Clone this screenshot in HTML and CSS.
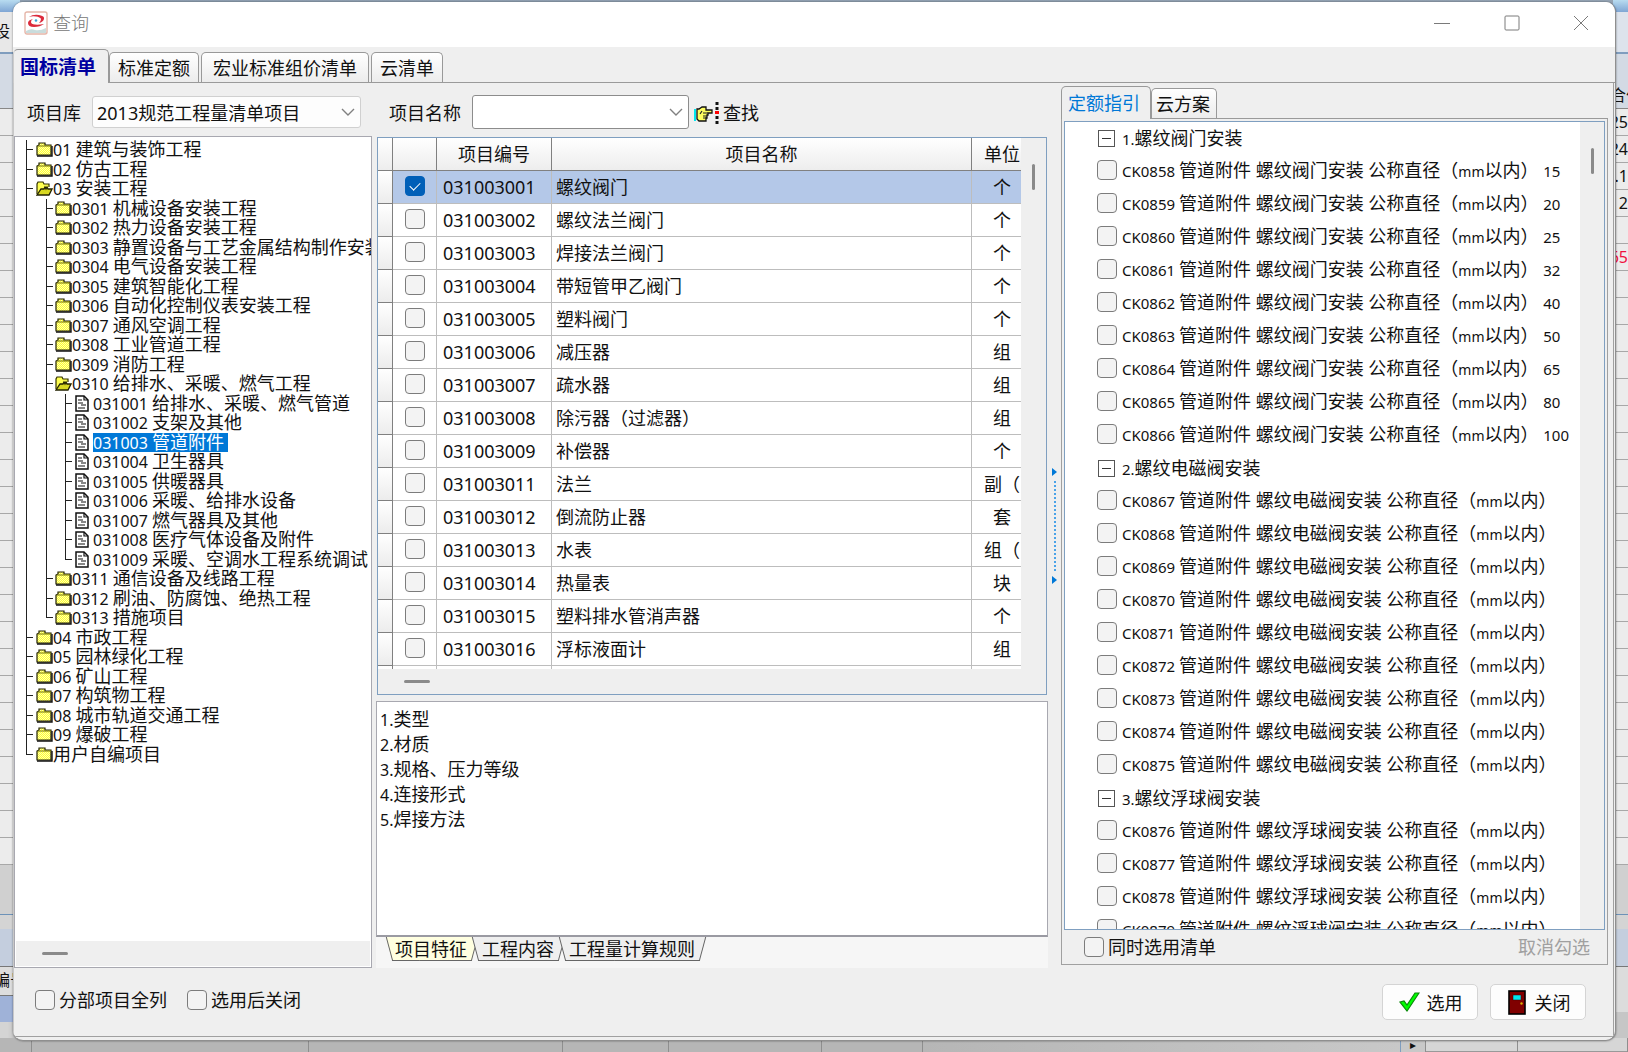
FILE: index.html
```html
<!DOCTYPE html>
<html lang="zh-CN">
<head>
<meta charset="utf-8">
<meta name="viewport" content="width=device-width, initial-scale=1">
<title>查询</title>
<link rel="stylesheet" href="styles.css">
</head>
<body>

<svg class="sprite" aria-hidden="true">
  <defs>
    <pattern id="dither" width="2" height="2" patternUnits="userSpaceOnUse">
      <rect width="2" height="2" fill="#ffff30"/><rect width="1" height="1" fill="#ffffb0"/><rect x="1" y="1" width="1" height="1" fill="#ffffb0"/>
    </pattern>
  </defs>
  <symbol id="folder" viewBox="0 0 17 15">
    <path d="M1 13V4l2-1V1h6v2h6v10z" fill="url(#dither)" stroke="#222200" stroke-width="1.2"/>
    <path d="M2 4h13" stroke="#77770a"/><path d="M1 14h15V4" fill="none" stroke="#111" stroke-width="1.4"/>
  </symbol>
  <symbol id="folder-open" viewBox="0 0 17 15">
    <path d="M1 13V3l1-2h5l1 2h5v3" fill="#ffff50" stroke="#333300" stroke-width="1.2"/>
    <path d="M1 14l4-6h3l1-2 1 2 1-2 1 2h4l-3 6z" fill="#d8d820" stroke="#222200" stroke-width="1.3"/>
  </symbol>
  <symbol id="doc" viewBox="0 0 14 17">
    <path d="M1 1h8l4 4v11H1z" fill="#fff" stroke="#111" stroke-width="1.5"/>
    <path d="M9 1v4h4M3 5h4M3 8h5M6 10h5M3 13h7" fill="none" stroke="#111" stroke-width="1.2"/>
  </symbol>
  <symbol id="chevron" viewBox="0 0 14 8">
    <path d="M1 1l6 6 6-6" fill="none" stroke="#808080" stroke-width="1.4"/>
  </symbol>
</svg>

<div class="backdrop" aria-hidden="true">
  <div class="edge edge-left">
    <div class="edge-sky"></div>
    <div class="edge-bar"><span>设</span></div>
    <div class="edge-head"></div>
    <div class="edge-rows"></div>
    <div class="edge-gap"></div>
    <div class="edge-tool"></div>
    <div class="edge-name"><span>编号</span></div>
    <div class="edge-sel"></div>
  </div>
  <div class="edge edge-right">
    <div class="edge-sky"></div>
    <div class="edge-bar"></div>
    <div class="edge-head edge-head-label"><span>合价</span></div>
    <div class="edge-rows">
      <span>25</span><span>24</span><span>.1</span><span>2</span><span></span><span class="neg">65</span>
    </div>
    <div class="edge-gap"></div>
    <div class="edge-tool"></div>
    <div class="edge-foot"></div>
  </div>
  <div class="edge-bottom">
    <i></i><i></i><i></i><i></i><i></i><i></i><b></b><em>▸</em><u></u><s></s>
  </div>
</div>

<main class="window">
  <header class="titlebar">
    <svg class="logo" viewBox="0 0 24 24" aria-hidden="true">
      <rect x="1" y="1" width="22" height="22" rx="2" fill="#fff" stroke="#e5b5a8" stroke-width="1.4"/>
      <path d="M2 20q5-3 9-1 5 1 11-2v5H2z" fill="#c9dcdc"/>
      <path d="M5 6q4-3 10-2 6 1 5 4-1 3-5 4 2-2 2-4-1-2-5-2.500-4-.5-7 .5z" fill="#dc2b3c"/>
      <path d="M9 8q-5 1-5 4 0 4 6 4 6 0 10-3-6 1-9 .5-4-.5-4-2.500 0-2 2-3z" fill="#dc2b3c"/>
      <circle cx="12" cy="9.500" r="1.300" fill="#3aa6d8"/>
    </svg>
    <h1>查询</h1>
    <button class="win-btn" aria-label="最小化"><svg viewBox="0 0 16 16"><path d="M0 8.500h16"/></svg></button>
    <button class="win-btn" aria-label="最大化"><svg viewBox="0 0 16 16"><rect x="1" y="1" width="14" height="14" rx="1"/></svg></button>
    <button class="win-btn" aria-label="关闭窗口"><svg viewBox="0 0 16 16"><path d="M1 1l14 14M15 1L1 15"/></svg></button>
  </header>

  <nav class="tabs main-tabs" role="tablist">
    <button class="tab active" role="tab" aria-selected="true">国标清单</button>
    <button class="tab" role="tab">标准定额</button>
    <button class="tab wide" role="tab">宏业标准组价清单</button>
    <button class="tab" role="tab">云清单</button>
  </nav>

  <div class="page">
    <div class="columns">

      <section class="col-left">
        <div class="toolbar">
          <label for="lib">项目库</label>
          <div class="combo combo-soft">
            <select id="lib"><option>2013规范工程量清单项目</option></select>
            <svg><use href="#chevron"/></svg>
          </div>
        </div>
        <div class="tree-panel">
          <ul class="tree" role="tree">
            <li class="l0"><svg><use href="#folder"/></svg><span><b>01 </b>建筑与装饰工程</span></li>
            <li class="l0"><svg><use href="#folder"/></svg><span><b>02 </b>仿古工程</span></li>
            <li class="l0"><svg><use href="#folder-open"/></svg><span><b>03 </b>安装工程</span></li>
            <li class="l1"><svg><use href="#folder"/></svg><span><b>0301 </b>机械设备安装工程</span></li>
            <li class="l1"><svg><use href="#folder"/></svg><span><b>0302 </b>热力设备安装工程</span></li>
            <li class="l1"><svg><use href="#folder"/></svg><span><b>0303 </b>静置设备与工艺金属结构制作安装工程</span></li>
            <li class="l1"><svg><use href="#folder"/></svg><span><b>0304 </b>电气设备安装工程</span></li>
            <li class="l1"><svg><use href="#folder"/></svg><span><b>0305 </b>建筑智能化工程</span></li>
            <li class="l1"><svg><use href="#folder"/></svg><span><b>0306 </b>自动化控制仪表安装工程</span></li>
            <li class="l1"><svg><use href="#folder"/></svg><span><b>0307 </b>通风空调工程</span></li>
            <li class="l1"><svg><use href="#folder"/></svg><span><b>0308 </b>工业管道工程</span></li>
            <li class="l1"><svg><use href="#folder"/></svg><span><b>0309 </b>消防工程</span></li>
            <li class="l1"><svg><use href="#folder-open"/></svg><span><b>0310 </b>给排水、采暖、燃气工程</span></li>
            <li class="l2"><svg><use href="#doc"/></svg><span><b>031001 </b>给排水、采暖、燃气管道</span></li>
            <li class="l2"><svg><use href="#doc"/></svg><span><b>031002 </b>支架及其他</span></li>
            <li class="l2"><svg><use href="#doc"/></svg><span class="current"><b>031003 </b>管道附件</span></li>
            <li class="l2"><svg><use href="#doc"/></svg><span><b>031004 </b>卫生器具</span></li>
            <li class="l2"><svg><use href="#doc"/></svg><span><b>031005 </b>供暖器具</span></li>
            <li class="l2"><svg><use href="#doc"/></svg><span><b>031006 </b>采暖、给排水设备</span></li>
            <li class="l2"><svg><use href="#doc"/></svg><span><b>031007 </b>燃气器具及其他</span></li>
            <li class="l2"><svg><use href="#doc"/></svg><span><b>031008 </b>医疗气体设备及附件</span></li>
            <li class="l2 last"><svg><use href="#doc"/></svg><span><b>031009 </b>采暖、空调水工程系统调试</span></li>
            <li class="l1"><svg><use href="#folder"/></svg><span><b>0311 </b>通信设备及线路工程</span></li>
            <li class="l1"><svg><use href="#folder"/></svg><span><b>0312 </b>刷油、防腐蚀、绝热工程</span></li>
            <li class="l1 last"><svg><use href="#folder"/></svg><span><b>0313 </b>措施项目</span></li>
            <li class="l0"><svg><use href="#folder"/></svg><span><b>04 </b>市政工程</span></li>
            <li class="l0"><svg><use href="#folder"/></svg><span><b>05 </b>园林绿化工程</span></li>
            <li class="l0"><svg><use href="#folder"/></svg><span><b>06 </b>矿山工程</span></li>
            <li class="l0"><svg><use href="#folder"/></svg><span><b>07 </b>构筑物工程</span></li>
            <li class="l0"><svg><use href="#folder"/></svg><span><b>08 </b>城市轨道交通工程</span></li>
            <li class="l0"><svg><use href="#folder"/></svg><span><b>09 </b>爆破工程</span></li>
            <li class="l0 last"><svg><use href="#folder"/></svg><span>用户自编项目</span></li>
          </ul>
          <div class="hscroll"><div class="thumb"></div></div>
        </div>
      </section>

      <section class="col-mid">
        <div class="toolbar toolbar-mid">
          <label for="name">项目名称</label>
          <div class="combo">
            <select id="name"><option></option></select>
            <svg><use href="#chevron"/></svg>
          </div>
          <button class="find">
            <svg viewBox="0 0 25 22" aria-hidden="true">
              <path d="M1 7v12" stroke="#00e8f0" stroke-width="2"/>
              <path d="M3 7h2l3-2h4v3h6v3h-4v2h-1v3h-1v3H5l-2-2z" fill="#ffff60" stroke="#111" stroke-width="1.300"/>
              <path d="M8 9l-2 3M9 11h5M9 14h4M9 16h4" fill="none" stroke="#222" stroke-width="1.200"/>
              <path d="M23 0v3M23 5v3M23 14v3M23 19v3" stroke="#111" stroke-width="3"/>
              <path d="M23 9v3" stroke="#f00" stroke-width="4"/>
            </svg>
            <span>查找</span>
          </button>
        </div>

        <div class="grid-panel">
          <div class="grid-view">
            <table class="grid">
              <colgroup><col class="c-mark"><col class="c-check"><col class="c-code"><col><col class="c-unit"></colgroup>
              <thead><tr><th></th><th></th><th>项目编号</th><th>项目名称</th><th>单位</th></tr></thead>
              <tbody>
                <tr class="selected"><td></td><td><input type="checkbox" aria-label="031003001" checked></td><td>031003001</td><td>螺纹阀门</td><td>个</td></tr>
                <tr><td></td><td><input type="checkbox" aria-label="031003002"></td><td>031003002</td><td>螺纹法兰阀门</td><td>个</td></tr>
                <tr><td></td><td><input type="checkbox" aria-label="031003003"></td><td>031003003</td><td>焊接法兰阀门</td><td>个</td></tr>
                <tr><td></td><td><input type="checkbox" aria-label="031003004"></td><td>031003004</td><td>带短管甲乙阀门</td><td>个</td></tr>
                <tr><td></td><td><input type="checkbox" aria-label="031003005"></td><td>031003005</td><td>塑料阀门</td><td>个</td></tr>
                <tr><td></td><td><input type="checkbox" aria-label="031003006"></td><td>031003006</td><td>减压器</td><td>组</td></tr>
                <tr><td></td><td><input type="checkbox" aria-label="031003007"></td><td>031003007</td><td>疏水器</td><td>组</td></tr>
                <tr><td></td><td><input type="checkbox" aria-label="031003008"></td><td>031003008</td><td>除污器（过滤器）</td><td>组</td></tr>
                <tr><td></td><td><input type="checkbox" aria-label="031003009"></td><td>031003009</td><td>补偿器</td><td>个</td></tr>
                <tr><td></td><td><input type="checkbox" aria-label="031003011"></td><td>031003011</td><td>法兰</td><td>副（</td></tr>
                <tr><td></td><td><input type="checkbox" aria-label="031003012"></td><td>031003012</td><td>倒流防止器</td><td>套</td></tr>
                <tr><td></td><td><input type="checkbox" aria-label="031003013"></td><td>031003013</td><td>水表</td><td>组（</td></tr>
                <tr><td></td><td><input type="checkbox" aria-label="031003014"></td><td>031003014</td><td>热量表</td><td>块</td></tr>
                <tr><td></td><td><input type="checkbox" aria-label="031003015"></td><td>031003015</td><td>塑料排水管消声器</td><td>个</td></tr>
                <tr><td></td><td><input type="checkbox" aria-label="031003016"></td><td>031003016</td><td>浮标液面计</td><td>组</td></tr>
                <tr><td></td><td></td><td></td><td></td><td></td></tr>
              </tbody>
            </table>
          </div>
          <div class="vscroll"><div class="thumb"></div></div>
          <div class="hscroll"><div class="thumb"></div></div>
        </div>

        <div class="features">
          <p><b>1.</b>类型</p>
          <p><b>2.</b>材质</p>
          <p><b>3.</b>规格、压力等级</p>
          <p><b>4.</b>连接形式</p>
          <p><b>5.</b>焊接方法</p>
        </div>
        <div class="sheet-tabs" role="tablist">
          <button class="sheet active" role="tab" aria-selected="true">项目特征</button>
          <button class="sheet" role="tab">工程内容</button>
          <button class="sheet" role="tab">工程量计算规则</button>
        </div>
      </section>

      <div class="splitter" role="separator"><i></i><span></span><i></i></div>

      <section class="col-right">
        <nav class="tabs side-tabs" role="tablist">
          <button class="tab active" role="tab" aria-selected="true">定额指引</button>
          <button class="tab" role="tab">云方案</button>
        </nav>
        <div class="side-page">
          <div class="quota">
            <ul>
              <li class="group"><button aria-label="折叠"></button><span><b>1.</b>螺纹阀门安装</span></li>
              <li><label><input type="checkbox"><span><b>CK0858 </b>管道附件 螺纹阀门安装 公称直径（<small>mm</small>以内） <b>15</b></span></label></li>
              <li><label><input type="checkbox"><span><b>CK0859 </b>管道附件 螺纹阀门安装 公称直径（<small>mm</small>以内） <b>20</b></span></label></li>
              <li><label><input type="checkbox"><span><b>CK0860 </b>管道附件 螺纹阀门安装 公称直径（<small>mm</small>以内） <b>25</b></span></label></li>
              <li><label><input type="checkbox"><span><b>CK0861 </b>管道附件 螺纹阀门安装 公称直径（<small>mm</small>以内） <b>32</b></span></label></li>
              <li><label><input type="checkbox"><span><b>CK0862 </b>管道附件 螺纹阀门安装 公称直径（<small>mm</small>以内） <b>40</b></span></label></li>
              <li><label><input type="checkbox"><span><b>CK0863 </b>管道附件 螺纹阀门安装 公称直径（<small>mm</small>以内） <b>50</b></span></label></li>
              <li><label><input type="checkbox"><span><b>CK0864 </b>管道附件 螺纹阀门安装 公称直径（<small>mm</small>以内） <b>65</b></span></label></li>
              <li><label><input type="checkbox"><span><b>CK0865 </b>管道附件 螺纹阀门安装 公称直径（<small>mm</small>以内） <b>80</b></span></label></li>
              <li><label><input type="checkbox"><span><b>CK0866 </b>管道附件 螺纹阀门安装 公称直径（<small>mm</small>以内） <b>100</b></span></label></li>
              <li class="group"><button aria-label="折叠"></button><span><b>2.</b>螺纹电磁阀安装</span></li>
              <li><label><input type="checkbox"><span><b>CK0867 </b>管道附件 螺纹电磁阀安装 公称直径（<small>mm</small>以内）</span></label></li>
              <li><label><input type="checkbox"><span><b>CK0868 </b>管道附件 螺纹电磁阀安装 公称直径（<small>mm</small>以内）</span></label></li>
              <li><label><input type="checkbox"><span><b>CK0869 </b>管道附件 螺纹电磁阀安装 公称直径（<small>mm</small>以内）</span></label></li>
              <li><label><input type="checkbox"><span><b>CK0870 </b>管道附件 螺纹电磁阀安装 公称直径（<small>mm</small>以内）</span></label></li>
              <li><label><input type="checkbox"><span><b>CK0871 </b>管道附件 螺纹电磁阀安装 公称直径（<small>mm</small>以内）</span></label></li>
              <li><label><input type="checkbox"><span><b>CK0872 </b>管道附件 螺纹电磁阀安装 公称直径（<small>mm</small>以内）</span></label></li>
              <li><label><input type="checkbox"><span><b>CK0873 </b>管道附件 螺纹电磁阀安装 公称直径（<small>mm</small>以内）</span></label></li>
              <li><label><input type="checkbox"><span><b>CK0874 </b>管道附件 螺纹电磁阀安装 公称直径（<small>mm</small>以内）</span></label></li>
              <li><label><input type="checkbox"><span><b>CK0875 </b>管道附件 螺纹电磁阀安装 公称直径（<small>mm</small>以内）</span></label></li>
              <li class="group"><button aria-label="折叠"></button><span><b>3.</b>螺纹浮球阀安装</span></li>
              <li><label><input type="checkbox"><span><b>CK0876 </b>管道附件 螺纹浮球阀安装 公称直径（<small>mm</small>以内）</span></label></li>
              <li><label><input type="checkbox"><span><b>CK0877 </b>管道附件 螺纹浮球阀安装 公称直径（<small>mm</small>以内）</span></label></li>
              <li><label><input type="checkbox"><span><b>CK0878 </b>管道附件 螺纹浮球阀安装 公称直径（<small>mm</small>以内）</span></label></li>
              <li><label><input type="checkbox"><span><b>CK0879 </b>管道附件 螺纹浮球阀安装 公称直径（<small>mm</small>以内）</span></label></li>
            </ul>
            <div class="vscroll"><div class="thumb"></div></div>
          </div>
          <div class="side-foot">
            <label><input type="checkbox"><span>同时选用清单</span></label>
            <button disabled>取消勾选</button>
          </div>
        </div>
      </section>
    </div>

    <footer class="footer">
      <label><input type="checkbox"><span>分部项目全列</span></label>
      <label><input type="checkbox"><span>选用后关闭</span></label>
      <button class="action push">
        <svg viewBox="0 0 22 22" aria-hidden="true"><path d="M2 11l4-1 3 4L17 2h4L9 20z" fill="#0f0" stroke="#0a8a0a" stroke-width="1.200"/></svg>
        <span>选用</span>
      </button>
      <button class="action">
        <svg viewBox="0 0 22 26" aria-hidden="true"><rect x="3" y="2" width="16" height="23" fill="#800000" stroke="#000" stroke-width="1.600"/><rect x="7" y="6" width="8" height="5" fill="#00e8f0" stroke="#400" stroke-width=".5"/><circle cx="15.500" cy="14.500" r="1.200" fill="#d8b000"/></svg>
        <span>关闭</span>
      </button>
    </footer>
  </div>
</main>
</body>
</html>
```

FILE: styles.css
```css
* { box-sizing: border-box; }

body {
  margin: 0;
  height: 100vh;
  padding: 2px 12px 11px 13px;
  overflow: hidden;
  background: #c4c4c4;
  color: #111;
  font-family: "Noto Sans", "Noto Sans CJK SC", sans-serif;
  font-size: 18px;
  line-height: 24px;
}

button, select, input { font: inherit; color: inherit; margin: 0; padding: 0; }
button { border: 0; background: none; }
b, small { font-weight: 400; font-size: 16px; line-height: 16px; }
small { font-size: 14px; }
ul { margin: 0; padding: 0; list-style: none; }
svg { display: block; flex: none; }
.sprite { position: absolute; width: 0; height: 0; }

input[type="checkbox"] {
  appearance: none;
  display: grid;
  place-items: center;
  flex: none;
  width: 20px;
  height: 20px;
  border: 1px solid #7c7c7c;
  border-radius: 4px;
  background: #f3f3f3;
}
input[type="checkbox"]:checked { background: #005fb8; border-color: #005fb8; }
input[type="checkbox"]:checked::before {
  content: "";
  width: 9px;
  height: 5px;
  margin-bottom: 3px;
  border: solid #fff;
  border-width: 0 0 1px 1px;
  transform: rotate(-45deg);
}
label { display: flex; align-items: center; gap: 5px; white-space: nowrap; }

/* Application behind the dialog */
.backdrop { position: absolute; inset: 0; overflow: hidden; background: linear-gradient(90deg, #8fa0b2, #96a5b5); }
.edge { position: absolute; top: 0; bottom: 0; width: 20px; display: flex; flex-direction: column; background: #d4d4d4; overflow: hidden; line-height: 27px; font-size: 16px; }
.edge span { display: block; white-space: nowrap; height: 27px; }
.edge-left { left: 0; box-shadow: inset -6px 0 6px #0003; }
.edge-right { right: 0; width: 15px; }
.edge-sky { flex: none; height: 12px; background: linear-gradient(#b8dcf0, #7fa6d4); }
.edge-bar { flex: none; height: 42px; padding-top: 6px; background: #dde3ec; border-bottom: 2px solid #7f9dbe; }
.edge-left .edge-bar { background: #e8e8e8; }
.edge-bar span, .edge-name span { margin-left: -6px; }
.edge-head { flex: none; height: 55px; background: #d3dae4; border-bottom: 1px solid #888; }
.edge-head-label { padding-top: 28px; }
.edge-head-label span { margin-left: -3px; }
.edge-rows { flex: none; height: 756px; background: repeating-linear-gradient(#ececec 0 26px, #a8a8a8 26px 27px); }
.edge-right .edge-rows { display: flex; flex-direction: column; align-items: flex-end; }
.edge-rows .neg { color: #f01040; }
.edge-gap { flex: none; height: 50px; background: #d0d0d0; border-bottom: 1px solid #6d92b8; }
.edge-tool { flex: none; height: 52px; background: #c4cede; border-top: 14px solid #d4d4d4; border-bottom: 1px solid #777; }
.edge-name { flex: none; height: 29px; background: #ddd; border-bottom: 1px solid #777; }
.edge-sel { flex: none; height: 26px; background: #9fb2d8; }
.edge-foot { flex: 1; border-bottom: 40px solid #c6c6c6; background: #dcdcdc; }
.edge-bottom { position: absolute; left: 0; right: 0; bottom: 0; height: 14px; display: grid; grid-template-columns: 32px 277px 254px 106px 153px 101px 1fr 25px 92px 110px; background: #b6b6b6; overflow: hidden; line-height: 14px; font-size: 12px; }
.edge-bottom > * { border-right: 1px solid #8e8e8e; border-bottom: 3px solid #c4c4c4; }
.edge-bottom b { background: linear-gradient(90deg, #b6b6b6, #c8c8c8); border-right-color: #7f9dbe; }
.edge-bottom em { background: #c8c8c8; font-style: normal; text-align: center; }
.edge-bottom u, .edge-bottom s { background: #d6d6d6; border-bottom: 4px double #999; }

/* Dialog */
.window {
  position: relative;
  height: 100%;
  display: flex;
  flex-direction: column;
  padding-bottom: 3px;
  border: 1px solid #8f8f8f;
  border-width: 0 1px 1px 0;
  border-radius: 10px;
  background: #efefef;
  box-shadow: 0 0 2px #0008;
  overflow: hidden;
}
.titlebar { flex: none; height: 45px; display: flex; align-items: center; padding: 0 0 3px 11px; background: #fff; }
.titlebar h1 { margin: 0 auto 0 5px; font-size: 18px; font-weight: 300; color: #777; }
.logo { width: 24px; height: 24px; }
.win-btn { width: 70px; height: 42px; display: grid; place-items: center; }
.win-btn:last-child { width: 68px; }
.win-btn svg { width: 16px; height: 16px; fill: none; stroke: #7a7a7a; }

/* Tab strips */
.tabs { flex: none; display: flex; align-items: flex-end; gap: 2px; border-bottom: 1px solid #9a9a9a; }
.tab {
  height: 30px;
  padding: 0 8px;
  border: 1px solid #999;
  border-bottom: 0;
  border-radius: 5px 5px 0 0;
  background: linear-gradient(#fff, #ececec);
  white-space: nowrap;
}
.tab.active { height: 33px; margin-bottom: -1px; margin-right: -2px; background: #efefef; }
.main-tabs { height: 36px; }
.main-tabs .active { padding: 0 12px 0 6px; border-left-color: #ccc; font-size: 19px; font-weight: 700; color: #0000a0; height: 34px; }
.main-tabs .wide { padding: 0 11px; }
.side-tabs { height: 36px; }
.side-tabs .active { width: 90px; padding: 0 10px 0 6px; color: #0078d7; }
.side-tabs .tab:last-child { padding: 0 6px 0 4px; }

.page { flex: 1; min-height: 0; display: flex; flex-direction: column; margin-right: 1px; border: 1px solid #a0a0a0; border-top: 0; border-left-color: #c8c8c8; }
.columns { flex: 1; min-height: 0; display: grid; grid-template-columns: 358px minmax(0, 1fr) 13px 547px; padding-right: 5px; }
.columns > section { min-height: 0; display: flex; flex-direction: column; }

.toolbar { flex: none; height: 53px; display: flex; align-items: center; padding: 4px 11px 0 13px; }
.toolbar label { margin-right: 11px; padding-top: 3px; }
.combo { display: grid; align-items: center; width: 217px; }
.combo > * { grid-area: 1 / 1; }
.combo svg { width: 14px; height: 8px; margin-right: 6px; justify-self: end; pointer-events: none; }
.combo select { appearance: none; width: 100%; height: 34px; padding: 2px 24px 0 4px; border: 1px solid #8c8c8c; border-radius: 3px; background: #fff; }
.combo-soft { flex: 1; }
.combo-soft select { height: 32px; border-color: #d0d0d0; background: #fdfdfd; }
.toolbar-mid { padding: 3px 11px 0 13px; height: 54px; }
.find { display: flex; align-items: center; gap: 4px; margin-left: 5px; padding-top: 2px; }
.find svg { width: 25px; height: 22px; }

/* Item tree */
.tree-panel { flex: 1; min-height: 0; display: flex; flex-direction: column; border: 1px solid #a8a8b0; background: #fff; overflow: hidden; }
.tree { flex: none; height: 624px; margin-top: 3px; display: grid; grid-auto-rows: 1fr; line-height: 19px; --rail: linear-gradient(#222, #222); }
.tree li { display: flex; align-items: center; min-height: 0; white-space: nowrap; background-repeat: no-repeat; overflow: hidden; }
.tree svg { width: 17px; height: 15px; }
.tree span { padding-right: 4px; }
.l0 { padding-left: 21px; background-image: var(--rail), var(--rail); background-position: 11px 0, 11px 50%; background-size: 1px 100%, 7px 1px; }
.l0.last { background-size: 1px 50%, 7px 1px; }
.l1 { padding-left: 40px; background-image: var(--rail), var(--rail), var(--rail); background-position: 31px 0, 31px 50%, 11px 0; background-size: 1px 100%, 7px 1px, 1px 100%; }
.l1.last { background-size: 1px 50%, 7px 1px, 1px 100%; }
.l2 { padding-left: 60px; background-image: var(--rail), var(--rail), var(--rail), var(--rail); background-position: 50px 0, 50px 50%, 31px 0, 11px 0; background-size: 1px 100%, 7px 1px, 1px 100%, 1px 100%; }
.l2.last { background-size: 1px 50%, 7px 1px, 1px 100%, 1px 100%; }
.tree .l2 svg { width: 14px; height: 17px; margin-right: 4px; }
.tree .current { background: #0078d7; color: #fff; }

/* Slim scroll bars */
.hscroll { flex: none; height: 25px; display: flex; align-items: center; background: #efefef; }
.hscroll .thumb { width: 26px; height: 3px; margin-left: 26px; border-radius: 2px; background: #8a8a8a; }
.tree-panel .hscroll { margin: auto 1px 1px; }
.vscroll { width: 25px; background: #efefef; display: flex; justify-content: center; }
.vscroll .thumb { width: 3px; height: 26px; margin-top: 26px; border-radius: 2px; background: #8a8a8a; }

/* Item grid */
.col-mid { padding-left: 4px; }
.grid-panel { flex: none; display: grid; grid-template: 531px 25px / minmax(0, 1fr) 25px; margin: 0 1px 6px; border: 1px solid #7f9fc0; background: #efefef; }
.grid-view { overflow: hidden; background: #fff; }
.grid { width: calc(100% + 12px); table-layout: fixed; border-collapse: separate; border-spacing: 0; }
.c-mark { width: 15px; }
.c-check { width: 44px; }
.c-code { width: 115px; }
.c-unit { width: 61px; }
.grid th, .grid td { height: 33px; padding: 0 4px; border: solid #bdbdbd; border-width: 0 1px 1px 0; white-space: nowrap; font-weight: 400; }
.grid th { border-color: #808080; background: linear-gradient(#fff, #ededed); }
.grid td:first-child { border-color: #808080; background: linear-gradient(#fff, #ececec); }
.grid td:nth-child(3) { padding-left: 6px; }
.grid td:last-child { text-align: center; }
.grid td:nth-child(2) { padding-bottom: 2px; }
.grid input { margin: 0 auto; }
.selected td:not(:first-child) { background: #b4c8e8; }

.features { flex: 1; min-height: 0; padding: 5px 3px; border: 1px solid #a8a8b0; border-bottom: 2px solid #9a9aa2; background: #fff; overflow: hidden; }
.features p { margin: 0; line-height: 25px; }
.sheet-tabs { flex: none; height: 31px; display: flex; padding-left: 13px; background: #f6f6f6; isolation: isolate; }
.sheet { position: relative; height: 24px; padding: 0 8px 0 7px; line-height: 24px; white-space: nowrap; }
.sheet.active { padding: 0 8px 0 6px; }
.sheet::before, .sheet::after { content: ""; position: absolute; z-index: -1; top: 0; bottom: 0; background: #efefef; border-bottom: 1px solid #666; }
.sheet::before { left: 0; right: 40%; border-left: 1px solid #666; transform: skewX(15deg); }
.sheet::after { right: 0; left: 40%; border-right: 1px solid #666; transform: skewX(-15deg); }
.sheet.active::before, .sheet.active::after { background: #ffffe0; }

.splitter { display: flex; flex-direction: column; align-items: center; gap: 5px; padding-top: 385px; }
.splitter i { border: 4px solid transparent; border-left: 5px solid #0078d7; border-right: 0; }
.splitter span { height: 90px; border-left: 2px dotted #4aa3e8; }

/* Quota guide */
.side-page { flex: 1; min-height: 0; display: flex; flex-direction: column; margin-bottom: 3px; padding: 2px; border: 1px solid #a0a0a0; border-top: 0; }
.quota { flex: 1; min-height: 0; display: grid; grid-template-columns: minmax(0, 1fr) 24px; border: 1px solid #7f9fc0; background: #fff; overflow: hidden; }
.quota .vscroll { width: auto; }
.quota ul { min-height: 0; }
.quota b { font-size: 15px; }
.quota li { height: 33px; padding: 0 0 3px 32px; display: flex; align-items: center; }
.quota .group { padding-bottom: 1px; }
.group button { width: 17px; height: 17px; margin: 0 7px 0 1px; border: 1px solid #555; display: grid; place-items: center; }
.group button::before { content: ""; width: 9px; height: 1px; background: #333; }
.side-foot { flex: none; height: 32px; display: flex; align-items: center; justify-content: space-between; padding: 1px 15px 0 20px; }
.side-foot label { gap: 4px; }
.side-foot button { color: #a0a0a0; }

.footer { flex: none; height: 68px; display: flex; align-items: center; gap: 12px; padding: 0 27px 0 21px; }
.footer label { gap: 4px; padding-bottom: 4px; }
.footer label + label { margin-left: 8px; }
.action { width: 96px; height: 36px; display: flex; align-items: center; justify-content: center; gap: 7px; border: 1px solid #d4d4d4; border-radius: 5px; background: #fdfdfd; }
.action svg { width: 22px; height: 26px; }
.action span { padding-top: 2px; }
.push { margin-left: auto; }
```
